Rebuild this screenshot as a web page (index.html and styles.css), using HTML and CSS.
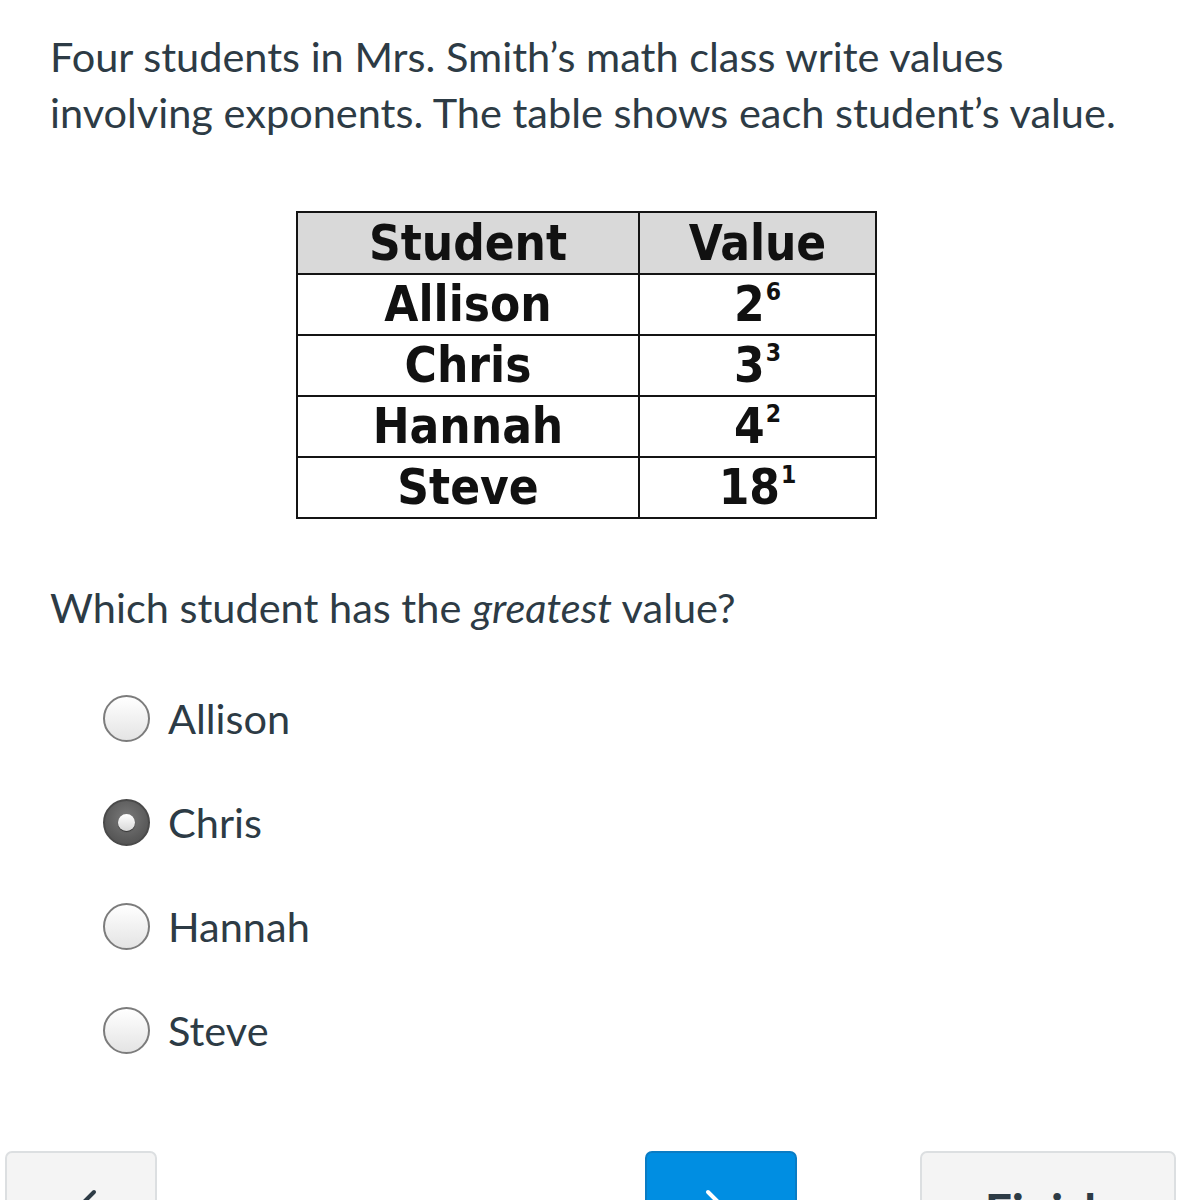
FILE: index.html
```html
<!DOCTYPE html>
<html lang="en">
<head>
<meta charset="utf-8">
<title>Quiz question</title>
<link rel="stylesheet" href="styles.css">
</head>
<body>
<main class="page">
  <p class="prompt">Four students in Mrs. Smith’s math class write values involving exponents. The table shows each student’s value.</p>
  <table class="values">
    <thead>
      <tr><th class="col-student">Student</th><th class="col-value">Value</th></tr>
    </thead>
    <tbody>
      <tr><td>Allison</td><td>2<sup>6</sup></td></tr>
      <tr><td>Chris</td><td>3<sup>3</sup></td></tr>
      <tr><td>Hannah</td><td>4<sup>2</sup></td></tr>
      <tr><td>Steve</td><td>18<sup>1</sup></td></tr>
    </tbody>
  </table>
  <p class="question">Which student has the <em>greatest</em> value?</p>
  <ul class="answers">
    <li class="answer"><span class="radio"></span><span class="label">Allison</span></li>
    <li class="answer"><span class="radio checked"></span><span class="label">Chris</span></li>
    <li class="answer"><span class="radio"></span><span class="label">Hannah</span></li>
    <li class="answer"><span class="radio"></span><span class="label">Steve</span></li>
  </ul>
</main>
<nav class="nav-bar">
  <button class="btn btn-prev" aria-label="Previous">
    <svg class="chev" width="36" height="56" viewBox="0 0 36 56"><path d="M31 4 L7 28 L31 52" fill="none" stroke="#2d3b45" stroke-width="4" stroke-linecap="round" stroke-linejoin="round"/></svg>
  </button>
  <button class="btn btn-next" aria-label="Next">
    <svg class="chev" width="36" height="56" viewBox="0 0 36 56"><path d="M5 4 L29 28 L5 52" fill="none" stroke="#ffffff" stroke-width="4" stroke-linecap="round" stroke-linejoin="round"/></svg>
  </button>
  <button class="btn btn-finish">Finish</button>
</nav>
</body>
</html>
```
FILE: styles.css
```css
html, body {
  margin: 0;
  padding: 0;
  background: #ffffff;
  overflow: hidden;
}
body {
  font-family: "Lato", "Open Sans", sans-serif;
  color: #2d3b45;
  width: 1199px;
  height: 1200px;
}
.page {
  padding: 28px 50px 0 50px;
}
.prompt {
  margin: 0;
  font-size: 41.5px;
  line-height: 56px;
}
.values {
  margin: 71px 0 0 246px;
  border-collapse: collapse;
  font-family: "DejaVu Sans Condensed", "DejaVu Sans", sans-serif;
  font-weight: bold;
  font-size: 49px;
  color: #111111;
  text-align: center;
}
.values th,
.values td {
  border: 2px solid #141414;
  padding: 0;
  height: 59px;
  line-height: 1;
}
.values thead th {
  background: #d9d9d9;
  font-weight: bold;
  height: 60px;
}
.col-student { width: 340px; }
.col-value { width: 235px; }
.values sup {
  font-size: 0.5em;
  line-height: 0;
  vertical-align: 0.85em;
  margin-left: 1px;
}
.question {
  margin: 60px 0 0 0;
  font-size: 41.5px;
  line-height: 56px;
}
.question em {
  font-style: italic;
}
.answers {
  list-style: none;
  margin: 31px 0 0 0;
  padding: 0 0 0 53px;
}
.answer {
  display: flex;
  align-items: center;
  gap: 18px;
  height: 104px;
}
.radio {
  box-sizing: border-box;
  width: 47px;
  height: 47px;
  border-radius: 50%;
  border: 2px solid #7c7c7c;
  background: linear-gradient(#ffffff, #e4e4e4);
  display: flex;
  align-items: center;
  justify-content: center;
  flex: none;
}
.radio.checked {
  border-color: #4a4a4a;
  background: radial-gradient(circle at 50% 40%, #7a7a7a 0%, #5c5c5c 60%, #4b4b4b 100%);
}
.radio.checked::after {
  content: "";
  width: 17px;
  height: 17px;
  border-radius: 50%;
  background: linear-gradient(#ffffff, #d8d8d8);
  box-shadow: 0 1px 1px rgba(0,0,0,0.5);
}
.label {
  font-size: 41.5px;
  line-height: 56px;
}
.nav-bar {
  position: absolute;
  top: 1151px;
  left: 0;
  display: flex;
  align-items: flex-start;
  padding-left: 5px;
}
.btn {
  box-sizing: border-box;
  height: 140px;
  border-radius: 7px;
  border: 2px solid #dcdfe1;
  background: #f4f4f4;
  display: flex;
  align-items: flex-start;
  justify-content: center;
  padding: 0;
  font-family: "Lato", sans-serif;
}
.btn-prev {
  width: 152px;
  padding-top: 35px;
}
.btn-next {
  width: 152px;
  margin-left: 488px;
  background: #008ee2;
  border-color: #0a7cc4;
  padding-top: 35px;
}
.btn-finish {
  width: 256px;
  margin-left: 123px;
  padding-top: 34px;
  font-size: 48px;
  line-height: 48px;
  font-weight: bold;
  color: #2d3b45;
}
```
